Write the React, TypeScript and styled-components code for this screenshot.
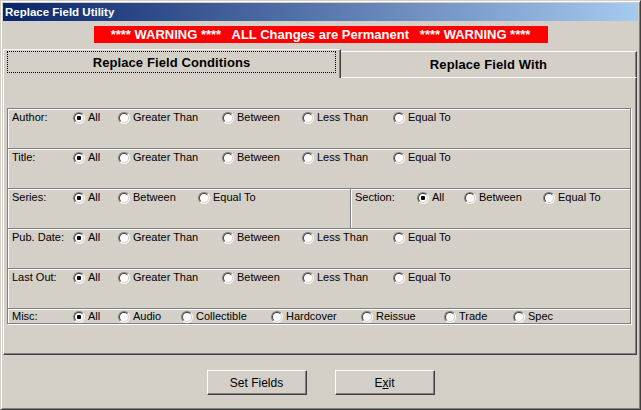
import React from "react";
import styled, { createGlobalStyle } from "styled-components";

const Global = createGlobalStyle`
  html, body { margin: 0; padding: 0; background: #d4d0c8; }
  body { font-family: "Liberation Sans", Arial, sans-serif; }
`;

const Window = styled.div`
  width: 641px;
  height: 410px;
  box-sizing: border-box;
  background: #d4d0c8;
  border: 1px solid;
  border-color: #d4d0c8 #404040 #404040 #d4d0c8;
  box-shadow: inset 1px 1px 0 #fff, inset -1px -1px 0 #808080;
  padding: 2px;
  display: flex;
  flex-direction: column;
  font-family: "Liberation Sans", Arial, sans-serif;
  font-size: 11px;
  color: #000;
`;

const TitleBar = styled.div`
  height: 18px;
  flex: none;
  background: linear-gradient(to right, #0a246a, #a6caf0);
  color: #fff;
  font-weight: bold;
  font-size: 11.5px;
  line-height: 18px;
  padding-left: 2px;
`;

const Warning = styled.div`
  align-self: center;
  margin-top: 5px;
  width: 454px;
  height: 17px;
  background: #ff0000;
  color: #fff;
  font-weight: bold;
  font-size: 13px;
  line-height: 17px;
  text-align: center;
  white-space: pre;
`;

const TabControl = styled.div`
  margin-top: 6px;
  width: 634px;
  display: flex;
  flex-direction: column;
`;

const TabStrip = styled.div`
  display: flex;
  align-items: flex-end;
  height: 29px;
`;

const ActiveTab = styled.div`
  box-sizing: border-box;
  width: 338px;
  height: 29px;
  border-top: 1px solid #fff;
  border-left: 1px solid #fff;
  border-right: 1px solid #404040;
  box-shadow: inset -1px 0 0 #808080;
  padding: 1px 4px 5px 3px;
  display: flex;
`;

const FocusRect = styled.div`
  flex: 1;
  border: 1px dotted #000;
  display: flex;
  align-items: center;
  justify-content: center;
  font-weight: bold;
  font-size: 13px;
  letter-spacing: 0.1px;
`;

const InactiveTab = styled.div`
  box-sizing: border-box;
  flex: 1;
  height: 27px;
  border-top: 1px solid #fff;
  border-right: 1px solid #404040;
  border-bottom: 1px solid #fff;
  box-shadow: inset -1px 0 0 #808080;
  display: flex;
  align-items: center;
  justify-content: center;
  font-weight: bold;
  font-size: 13px;
  letter-spacing: 0.1px;
`;

const Panel = styled.div`
  box-sizing: border-box;
  height: 277px;
  flex: none;
  border-left: 1px solid #fff;
  border-right: 1px solid #404040;
  border-bottom: 1px solid #404040;
  box-shadow: inset -1px -1px 0 #808080;
  padding: 30px 5px 0 3px;
`;

const Stack = styled.div`
  display: flex;
  flex-direction: column;
  & > * {
    flex: none;
  }
  & > * + * {
    margin-top: -1px;
  }
`;

const SplitRow = styled.div`
  display: flex;
  & > * + * {
    margin-left: -1px;
  }
`;

const GroupBox = styled.div<{ $compact?: boolean; $w?: number; $grow?: boolean }>`
  box-sizing: border-box;
  height: ${(p) => (p.$compact ? 16 : 41)}px;
  ${(p) => (p.$w ? `width: ${p.$w}px;` : "")}
  flex: ${(p) => (p.$grow ? "1 1 auto" : "none")};
  border: 1px solid #808080;
  box-shadow: inset 1px 1px 0 #fff, 1px 1px 0 #fff;
  padding: ${(p) => (p.$compact ? 1 : 2)}px 0 0 4px;
  display: flex;
  align-items: flex-start;
`;

const Label = styled.span<{ $w?: number }>`
  width: ${(p) => p.$w ?? 61}px;
  flex: none;
  height: 13px;
  line-height: 13px;
`;

const Option = styled.label<{ $w?: number }>`
  display: flex;
  align-items: center;
  gap: 3px;
  flex: none;
  height: 13px;
  line-height: 13px;
  width: ${(p) => (p.$w ? `${p.$w}px` : "auto")};
`;

const RadioOuter = styled.span`
  box-sizing: border-box;
  width: 12px;
  height: 12px;
  flex: none;
  border-radius: 50%;
  border: 1px solid;
  border-color: #808080 #fff #fff #808080;
  display: flex;
  align-items: center;
  justify-content: center;
`;

const RadioInner = styled.span<{ $checked: boolean }>`
  box-sizing: border-box;
  width: 10px;
  height: 10px;
  border-radius: 50%;
  border: 1px solid;
  border-color: #404040 #d4d0c8 #d4d0c8 #404040;
  background: #fff;
  display: flex;
  align-items: center;
  justify-content: center;
  &::after {
    content: "";
    width: 4px;
    height: 4px;
    border-radius: 1px;
    background: #000;
    display: ${(p) => (p.$checked ? "block" : "none")};
  }
`;

const ButtonRow = styled.div`
  display: flex;
  justify-content: center;
  gap: 28px;
  margin-top: 15px;
`;

const Button = styled.button`
  box-sizing: border-box;
  width: 100px;
  height: 25px;
  padding: 0;
  background: #d4d0c8;
  border: 1px solid;
  border-color: #fff #404040 #404040 #fff;
  box-shadow: inset -1px -1px 0 #808080;
  font-family: "Liberation Sans", Arial, sans-serif;
  font-size: 12px;
  color: #000;
`;

type Opt = [string, number?];

const standard: Opt[] = [["All", 45], ["Greater Than", 104], ["Between", 80], ["Less Than", 91], ["Equal To"]];

const Radio: React.FC<{ checked?: boolean }> = ({ checked = false }) => (
  <RadioOuter>
    <RadioInner $checked={checked} />
  </RadioOuter>
);

const Options: React.FC<{ opts: Opt[] }> = ({ opts }) => (
  <>
    {opts.map(([text, w], i) => (
      <Option key={text} $w={w}>
        <Radio checked={i === 0} />
        {text}
      </Option>
    ))}
  </>
);

export default function App() {
  return (
    <>
      <Global />
      <Window>
        <TitleBar>Replace Field Utility</TitleBar>
        <Warning>{"**** WARNING ****   ALL Changes are Permanent   **** WARNING ****"}</Warning>
        <TabControl>
          <TabStrip>
            <ActiveTab>
              <FocusRect>Replace Field Conditions</FocusRect>
            </ActiveTab>
            <InactiveTab>Replace Field With</InactiveTab>
          </TabStrip>
          <Panel>
            <Stack>
              <GroupBox>
                <Label>Author:</Label>
                <Options opts={standard} />
              </GroupBox>
              <GroupBox>
                <Label>Title:</Label>
                <Options opts={standard} />
              </GroupBox>
              <SplitRow>
                <GroupBox $w={344}>
                  <Label>Series:</Label>
                  <Options opts={[["All", 45], ["Between", 80], ["Equal To"]]} />
                </GroupBox>
                <GroupBox $grow>
                  <Label $w={62}>Section:</Label>
                  <Options opts={[["All", 47], ["Between", 79], ["Equal To"]]} />
                </GroupBox>
              </SplitRow>
              <GroupBox>
                <Label>Pub. Date:</Label>
                <Options opts={standard} />
              </GroupBox>
              <GroupBox>
                <Label>Last Out:</Label>
                <Options opts={standard} />
              </GroupBox>
              <GroupBox $compact>
                <Label>Misc:</Label>
                <Options
                  opts={[
                    ["All", 45],
                    ["Audio", 63],
                    ["Collectible", 90],
                    ["Hardcover", 90],
                    ["Reissue", 83],
                    ["Trade", 69],
                    ["Spec"],
                  ]}
                />
              </GroupBox>
            </Stack>
          </Panel>
        </TabControl>
        <ButtonRow>
          <Button>Set Fields</Button>
          <Button>
            E<u>x</u>it
          </Button>
        </ButtonRow>
      </Window>
    </>
  );
}
